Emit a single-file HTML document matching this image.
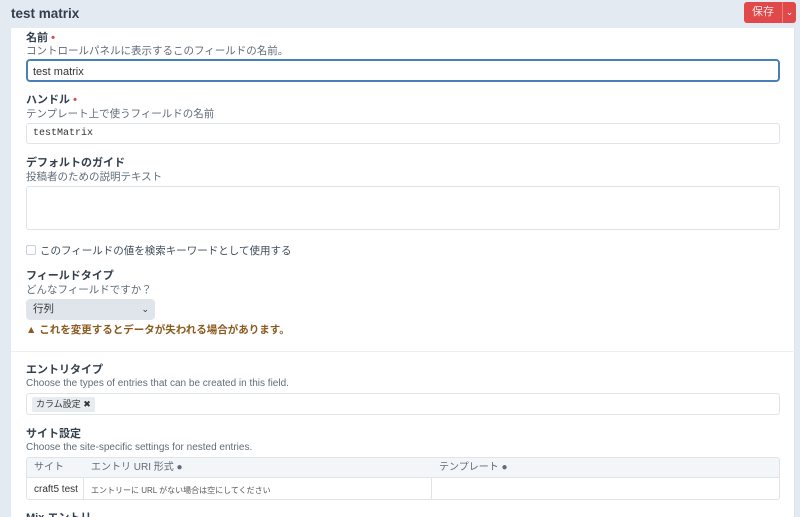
<!DOCTYPE html>
<html><head><meta charset="utf-8"><style>
*{box-sizing:border-box;margin:0;padding:0}
html,body{width:800px;height:517px;overflow:hidden}
body{background:#e4eaf2;font-family:"Liberation Sans","Noto Sans CJK JP",sans-serif;color:#3f4d5a;position:relative;line-height:14px}
.hdr{position:absolute;left:0;top:0;width:800px;height:28px;background:#e4eaf2}
.title{position:absolute;left:11px;top:7px;font-size:13.5px;font-weight:bold;color:#333f4d}
.save{position:absolute;left:744px;top:2px;width:38px;height:21px;background:#e0484a;border-radius:3px 0 0 3px;font-size:11px;line-height:21px;text-align:center;color:#fde6e6}
.dd{position:absolute;left:782px;top:2px;width:14px;height:21px;background:#e0484a;border-left:1px solid #f08080;border-radius:0 3px 3px 0;color:#fff;font-size:9px;line-height:21px;text-align:center}
.panel{position:absolute;left:11px;top:28px;width:784px;height:489px;background:#fff;border-right:1px solid #dde3ea}
.a{position:absolute;left:26px;font-size:11px;white-space:nowrap;line-height:14px}
.lb{font-weight:bold;color:#333f4d;font-size:11px}
.ds{color:#5f6c79;font-size:10.5px}
.req{color:#e0484a}
.inp{position:absolute;left:26px;width:754px;border:1px solid #dfe4ea;border-radius:3px;background:#fff}
</style></head><body>
<div class="hdr"><div class="title">test matrix</div><div class="save">保存</div><div class="dd">⌄</div></div>
<div class="panel"></div>
<div class="a lb" style="top:31px">名前 <span class="req">•</span></div>
<div class="a ds" style="top:44px">コントロールパネルに表示するこのフィールドの名前。</div>
<div class="inp" style="top:59px;height:23px;border:2px solid #4a80b8;border-radius:4px"><span style="position:absolute;left:5px;top:4px;font-size:11px;color:#333">test matrix</span></div>
<div class="a lb" style="top:93px">ハンドル <span class="req">•</span></div>
<div class="a ds" style="top:107px">テンプレート上で使うフィールドの名前</div>
<div class="inp" style="top:123px;height:21px"><span style="position:absolute;left:6px;top:3px;font-size:10px;font-family:'Liberation Mono',monospace;color:#333">testMatrix</span></div>
<div class="a lb" style="top:156px">デフォルトのガイド</div>
<div class="a ds" style="top:170px">投稿者のための説明テキスト</div>
<div class="inp" style="top:186px;height:44px"></div>
<div style="position:absolute;left:26px;top:245px;width:10px;height:10px;border:1px solid #c9d0d8;border-radius:2px"></div>
<div class="a ds" style="left:40px;top:244px;color:#3f4d5a">このフィールドの値を検索キーワードとして使用する</div>
<div class="a lb" style="top:269px">フィールドタイプ</div>
<div class="a ds" style="top:283px">どんなフィールドですか？</div>
<div style="position:absolute;left:26px;top:299px;width:129px;height:21px;background:#e0e5eb;border-radius:4px;font-size:10.5px;line-height:21px;padding-left:7px;color:#333">行列<span style="position:absolute;right:6px;top:0;font-size:9px">⌄</span></div>
<div class="a" style="top:323px;font-size:10.5px;color:#8b5a1e;font-weight:bold">▲ これを変更するとデータが失われる場合があります。</div>
<div style="position:absolute;left:11px;top:351px;width:784px;height:1px;background:#eceff3"></div>
<div class="a lb" style="top:363px">エントリタイプ</div>
<div class="a ds" style="top:377px;font-size:10px">Choose the types of entries that can be created in this field.</div>
<div class="inp" style="top:393px;height:22px"><span style="position:absolute;left:5px;top:3px;height:15px;background:#e7ecf1;border-radius:2px;font-size:9px;line-height:15px;padding:0 4px;color:#333">カラム設定 ✖</span></div>
<div class="a lb" style="top:427px">サイト設定</div>
<div class="a ds" style="top:441px;font-size:10px">Choose the site-specific settings for nested entries.</div>
<div style="position:absolute;left:26px;top:457px;width:754px;height:43px;border:1px solid #dfe4ea;border-radius:3px;overflow:hidden">
<div style="position:absolute;left:0;top:0;width:754px;height:20px;background:#f3f6f9;border-bottom:1px solid #dfe4ea"></div>
<div style="position:absolute;left:56px;top:20px;width:1px;height:22px;background:#dfe4ea"></div>
<div style="position:absolute;left:404px;top:20px;width:1px;height:22px;background:#dfe4ea"></div>
<span style="position:absolute;left:7px;top:3px;font-size:10px;color:#5f6c79">サイト</span>
<span style="position:absolute;left:64px;top:3px;font-size:10px;color:#5f6c79">エントリ URI 形式 ●</span>
<span style="position:absolute;left:412px;top:3px;font-size:10px;color:#5f6c79">テンプレート ●</span>
<span style="position:absolute;left:7px;top:25px;font-size:10px;color:#333">craft5 test</span>
<span style="position:absolute;left:64px;top:26px;font-size:8px;color:#555">エントリーに URL がない場合は空にしてください</span>
</div>
<div class="a lb" style="top:511px">Mix エントリ</div>
</body></html>
